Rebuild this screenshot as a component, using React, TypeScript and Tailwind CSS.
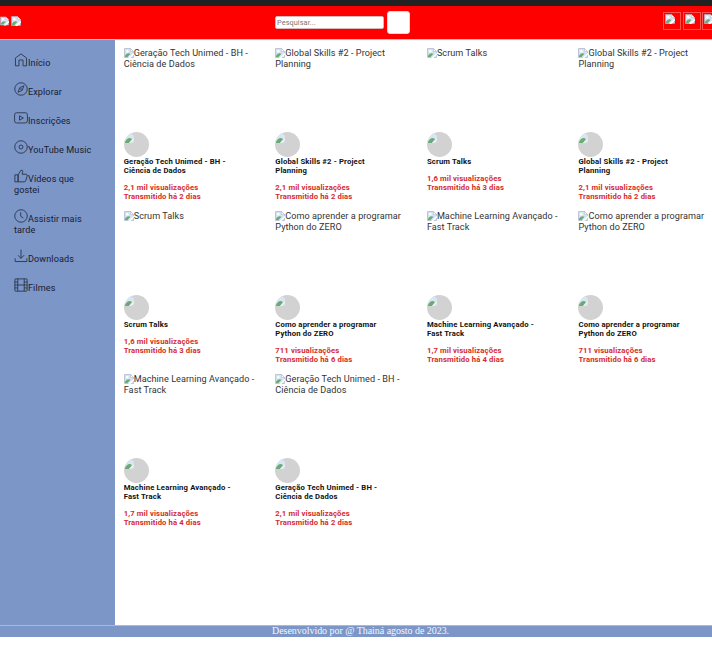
import React from 'react';

const ALT: Record<string, string[]> = {
  geracao: ['Geração Tech Unimed - BH -', 'Ciência de Dados'],
  global: ['Global Skills #2 - Project', 'Planning'],
  scrum: ['Scrum Talks'],
  como: ['Como aprender a programar', 'Python do ZERO'],
  machine: ['Machine Learning Avançado -', 'Fast Track'],
};

const META: Record<string, [string, string]> = {
  geracao: ['2,1 mil visualizações', 'Transmitido há 2 dias'],
  global: ['2,1 mil visualizações', 'Transmitido há 2 dias'],
  scrum: ['1,6 mil visualizações', 'Transmitido há 3 dias'],
  como: ['711 visualizações', 'Transmitido há 6 dias'],
  machine: ['1,7 mil visualizações', 'Transmitido há 4 dias'],
};

const VIDEOS = ['geracao', 'global', 'scrum', 'global', 'scrum', 'como', 'machine', 'como', 'machine', 'geracao'];

function Broken({ className = '' }: { className?: string }) {
  return (
    <svg viewBox="0 0 10 10" className={`shrink-0 ${className}`}>
      <path d="M.5 .5H6.5L9.5 3.5V9.5H.5Z" fill="#d5e3f5" stroke="#a9b4c0" strokeWidth=".7" />
      <path d="M6.5 .5V3.5H9.5Z" fill="#fff" stroke="#a9b4c0" strokeWidth=".5" />
      <circle cx="3.3" cy="3.2" r="1.2" fill="#fff" />
      <path d="M1 9V7.5Q3.5 4 6.5 5.7L3.5 9Z" fill="#6aab75" />
      <path d="M4 10L10 4.7V6.6L6.3 10Z" fill="#fff" />
    </svg>
  );
}

const ICONS: React.ReactNode[] = [
  <path d="M2.5 8.5L12 1.5L21.5 8.5V22H15.5V12H8.5V22H2.5Z" />,
  <><circle cx="12" cy="12" r="10.7" /><path d="M17 6.5L14.2 14.2L7 17.5L9.8 9.8Z" /><circle cx="12" cy="12" r=".7" /></>,
  <><rect x="1" y="3" width="22" height="17.5" rx="3.5" /><path d="M9.5 8.2L16 12L9.5 15.8Z" /></>,
  <><circle cx="12" cy="12" r="10.7" /><circle cx="12" cy="12" r="3.4" /></>,
  <path d="M7 10V22H1.5V10H7L12 2Q15.2 1.4 15 4.5L14 9H21Q23 9.5 22.5 12L20 20.5Q19.5 22 17.5 22H7V10" />,
  <><circle cx="12" cy="12" r="10.7" /><path d="M11.5 5.5V12.5L16 15.5" /></>,
  <path d="M12 1V16M6.5 10.5L12 16L17.5 10.5M2 16V21.5H22V16" />,
  <><rect x="1.5" y="1.5" width="21" height="21" rx="1" /><path d="M6.5 1.5V22.5M17.5 1.5V22.5M1.5 7H6.5M1.5 12H22.5M1.5 17H6.5M17.5 7H22.5M17.5 17H22.5" /></>,
];

const MENU: [string, string?][] = [
  ['Início'],
  ['Explorar'],
  ['Inscrições'],
  ['YouTube Music'],
  ['Vídeos que', 'gostei'],
  ['Assistir mais', 'tarde'],
  ['Downloads'],
  ['Filmes'],
];

function Sidebar() {
  return (
    <nav className="h-[585px] w-[114.5px] shrink-0 bg-[#7c96c8] pl-[14px] pt-[13px] text-[9.1px] leading-[11px] tracking-[0.09px] text-[#18202f]">
      {MENU.map(([first, second], i) => (
        <div key={first} className={second ? 'h-10' : 'h-[29px]'}>
          <div className="flex h-4 whitespace-nowrap">
            <svg viewBox="0 0 24 24" className="h-[14px] w-[14px] shrink-0 fill-none stroke-[#27324a] stroke-[1.5]" strokeLinejoin="round">
              {ICONS[i]}
            </svg>
            <span className="pt-[5px]">{first}</span>
          </div>
          {second && <div>{second}</div>}
        </div>
      ))}
    </nav>
  );
}

function Card({ id }: { id: string }) {
  return (
    <article className="h-[163px] whitespace-nowrap">
      <div className="h-[84px] text-[9.1px] leading-[11px] tracking-[0.06px] text-[#333]">
        {ALT[id].map((line, i) => (
          <div key={line} className="flex">
            {i === 0 && <Broken className="h-[10px] w-[10px]" />}
            <span>{line}</span>
          </div>
        ))}
      </div>
      <div className="h-[25px] w-[25px] overflow-hidden rounded-full bg-[#d2d2d2]">
        <svg viewBox="0 0 25 25" className="h-full w-full">
          <path d="M1 1H7L10 4V10L8 11H1Z" fill="#d8e5f3" />
          <path d="M1 10Q4 4 8 7L5 11H1Z" fill="#6aab75" />
          <path d="M5 11L10 6V8L7 11Z" fill="#eee" />
        </svg>
      </div>
      <h3 className="text-[7.7px] font-bold leading-[9px] tracking-[0.16px] text-[#111]">
        {ALT[id].map((line) => <div key={line}>{line}</div>)}
      </h3>
      <p className="pt-2 text-[7.7px] font-bold leading-[9px] tracking-[0.12px] text-[#d62b2a]">
        {META[id][0]}<br />{META[id][1]}
      </p>
    </article>
  );
}

export default function App() {
  return (
    <div className="h-[646px] w-[712px] overflow-hidden bg-white font-['Roboto',sans-serif]">
      <div className="h-[6px] bg-[#222]" />
      <header className="flex h-[32.5px] overflow-hidden bg-[#ff0000]">
        <div className="flex w-[275px] shrink-0 gap-[2px] pt-[10px]">
          <Broken className="h-[10px] w-[9px]" />
          <Broken className="h-[10px] w-[10px]" />
        </div>
        <div className="flex w-[388px] shrink-0 gap-[3px]">
          <input
            placeholder="Pesquisar..."
            className="mt-[10px] h-[13px] w-[109px] rounded-[2px] border border-[#d9b8b8] bg-white px-[1px] text-[7.3px] leading-[9px] tracking-[0.1px] placeholder:text-[#777]"
          />
          <button className="mt-[5px] h-[23px] w-[23px] rounded-[3px] border border-[#eed5d5] bg-white" />
        </div>
        <div className="flex shrink-0 gap-[1.5px] pt-[6px]">
          {[0, 1, 2].map((i) => (
            <div key={i} className="h-[18px] w-[18px] shrink-0 border border-[#ff5050] p-px">
              <Broken className="h-[10px] w-[10px]" />
            </div>
          ))}
        </div>
      </header>
      <main className="flex border-t border-[#e8b3bf]">
        <Sidebar />
        <section className="grid w-[606px] shrink-0 grid-cols-[repeat(4,151.6px)] content-start pl-[9.2px] pt-[8px]">
          {VIDEOS.map((id, i) => <Card key={i} id={id} />)}
        </section>
      </main>
      <footer className="h-[12px] whitespace-nowrap border-t border-[#a9b9dc] bg-[#7c96c8] pl-[272px] font-['Liberation_Serif',serif] text-[10px] leading-[10px] tracking-[-0.04px] text-[#f4f7ff]">
        Desenvolvido por @ Thainá agosto de 2023.
      </footer>
    </div>
  );
}
